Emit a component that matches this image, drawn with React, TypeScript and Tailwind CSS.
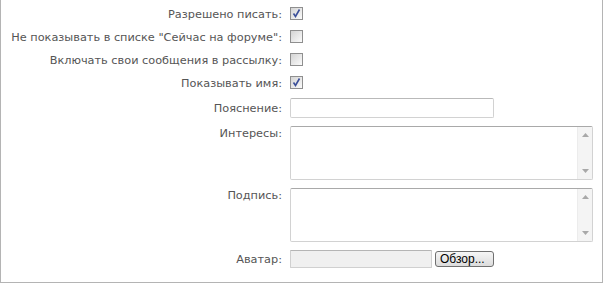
import React from 'react';

const font = { fontFamily: '"DejaVu Sans", Verdana, sans-serif' };

function Check({ checked }: { checked: boolean }) {
  return (
    <span className="relative inline-block w-[13px] h-[13px] border border-[#8f8f8f] bg-gradient-to-br from-[#d4d4d4] to-[#fbfbfb]">
      {checked && (
        <svg className="absolute left-0 top-0" width="11" height="11" viewBox="0 0 11 11">
          <path d="M2.5 5.5 L4.5 8.5 L8.5 1.5" fill="none" stroke="#3b4f99" strokeWidth="1.6" />
        </svg>
      )}
    </span>
  );
}

function Scrollbar() {
  return (
    <div className="w-[15px] h-full bg-[#f4f4f4] border-l border-[#ececec] flex flex-col justify-between items-center py-[6px]">
      <svg width="7" height="4" viewBox="0 0 7 4"><path d="M0 4 L3.5 0 L7 4 Z" fill="#a8a8a8" /></svg>
      <svg width="7" height="4" viewBox="0 0 7 4"><path d="M0 0 L3.5 4 L7 0 Z" fill="#a8a8a8" /></svg>
    </div>
  );
}

function Area() {
  return (
    <div className="w-[303px] h-[54px] border border-[#d2d2d2] border-t-[#a9a9a9] rounded-[2px] bg-white flex justify-end">
      <Scrollbar />
    </div>
  );
}

const checks = [
  { label: 'Разрешено писать:', checked: true },
  { label: 'Не показывать в списке "Сейчас на форуме":', checked: false },
  { label: 'Включать свои сообщения в рассылку:', checked: false },
  { label: 'Показывать имя:', checked: true },
];

export default function App() {
  return (
    <div className="w-[604px] h-[283px] bg-white" style={font}>
      <div className="w-[603px] h-[283px] border-l border-r border-b border-[#b4b4b4] pt-[7px] text-[11.3px] text-[#555]">
        {checks.map(c => (
          <div key={c.label} className="grid grid-cols-[289px_1fr] h-[23px]">
            <div className="text-right pr-[8px] pt-[1px] leading-[13px] whitespace-nowrap">{c.label}</div>
            <div className="flex items-start"><Check checked={c.checked} /></div>
          </div>
        ))}
        <div className="grid grid-cols-[289px_1fr] mt-[-1px]">
          <div className="text-right pr-[8px] pt-[4px] leading-[13px]">Пояснение:</div>
          <div className="w-[204px] h-[20px] border border-[#d2d2d2] border-t-[#b9b9b9] rounded-[2px]" />
        </div>
        <div className="grid grid-cols-[289px_1fr] mt-[8px]">
          <div className="text-right pr-[8px] pt-[1px] leading-[13px]">Интересы:</div>
          <Area />
        </div>
        <div className="grid grid-cols-[289px_1fr] mt-[8px]">
          <div className="text-right pr-[8px] pt-[1px] leading-[13px]">Подпись:</div>
          <Area />
        </div>
        <div className="grid grid-cols-[289px_1fr] mt-[8px]">
          <div className="text-right pr-[8px] pt-[3px] leading-[13px]">Аватар:</div>
          <div className="flex items-center gap-[3px]">
            <div className="w-[142px] h-[18px] border border-[#d0d0d0] border-t-[#b5b5b5] bg-[#f0f0f0] rounded-[1px]" />
            <button
              className="w-[59px] h-[16px] border border-[#707070] rounded-[3px] bg-gradient-to-b from-[#f6f6f6] to-[#dcdcdc] text-[12px] text-black leading-[14px] px-[4px] text-left"
              style={{ fontFamily: '"Liberation Sans", Arial, sans-serif' }}
            >
              Обзор...
            </button>
          </div>
        </div>
      </div>
    </div>
  );
}
